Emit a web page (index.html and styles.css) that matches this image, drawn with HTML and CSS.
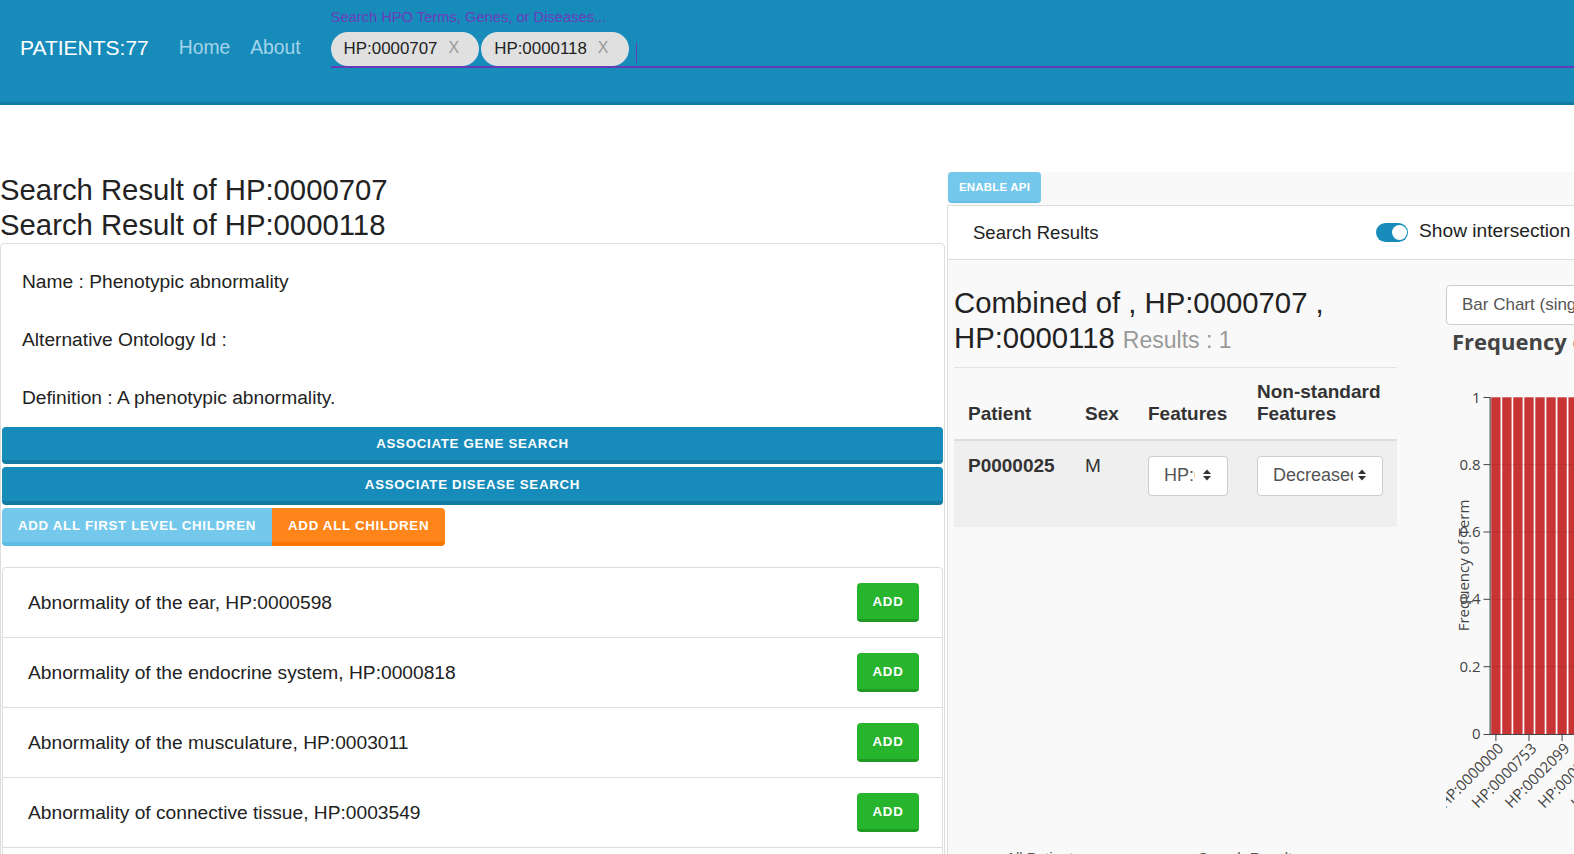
FILE: index.html
```html
<!DOCTYPE html>
<html lang="en">
<head>
<meta charset="utf-8">
<title>Patients</title>
<link rel="stylesheet" href="styles.css">
</head>
<body>
<header class="navbar">
  <div class="brand">PATIENTS:77</div>
  <nav class="nav">
    <a class="nav-link" href="#">Home</a>
    <a class="nav-link" href="#">About</a>
  </nav>
  <div class="search">
    <div class="search-label">Search HPO Terms, Genes, or Diseases...</div>
    <div class="search-field">
      <span class="chip"><span class="chip-text">HP:0000707</span><span class="chip-x">X</span></span>
      <span class="chip"><span class="chip-text">HP:0000118</span><span class="chip-x">X</span></span>
      <span class="caret-line"></span>
    </div>
  </div>
</header>

<main class="page">
  <section class="left">
    <h2 class="result-title">Search Result of HP:0000707</h2>
    <h2 class="result-title">Search Result of HP:0000118</h2>
    <div class="term-card">
      <div class="term-info">
        <p>Name : Phenotypic abnormality</p>
        <p>Alternative Ontology Id :</p>
        <p>Definition : A phenotypic abnormality.</p>
      </div>
      <button class="btn btn-block">Associate Gene Search</button>
      <button class="btn btn-block">Associate Disease Search</button>
      <div class="btn-group">
        <button class="btn btn-info">Add all first level children</button>
        <button class="btn btn-warning">Add all children</button>
      </div>
      <div class="term-list">
        <div class="term-row"><span>Abnormality of the ear, HP:0000598</span><button class="btn btn-add">Add</button></div>
        <div class="term-row"><span>Abnormality of the endocrine system, HP:0000818</span><button class="btn btn-add">Add</button></div>
        <div class="term-row"><span>Abnormality of the musculature, HP:0003011</span><button class="btn btn-add">Add</button></div>
        <div class="term-row"><span>Abnormality of connective tissue, HP:0003549</span><button class="btn btn-add">Add</button></div>
        <div class="term-row"><span>Abnormality of the eye, HP:0000478</span><button class="btn btn-add">Add</button></div>
      </div>
    </div>
  </section>

  <section class="right">
    <button class="btn-api">ENABLE API</button>
    <div class="results-card">
      <div class="results-head">
        <div class="results-title">Search Results</div>
        <div class="switch-group">
          <span class="switch"><span class="knob"></span></span>
          <span class="switch-label">Show intersection</span>
        </div>
      </div>
      <div class="results-body">
        <div class="results-main">
          <h3 class="combined">Combined of , HP:0000707 , HP:0000118 <small>Results : 1</small></h3>
          <hr class="rule">
          <table class="patients">
            <colgroup>
              <col class="c-patient"><col class="c-sex"><col class="c-feat"><col class="c-nsf">
            </colgroup>
            <thead>
              <tr><th>Patient</th><th>Sex</th><th>Features</th><th>Non-standard Features</th></tr>
            </thead>
            <tbody>
              <tr>
                <td class="pid">P0000025</td>
                <td>M</td>
                <td>
                  <div class="select sel-hp"><span class="select-text">HP:0000707</span>
                    <svg class="updown" width="10" height="14" viewBox="0 0 10 14"><path d="M1 6 L5 1.5 L9 6 Z M1 8 L5 12.5 L9 8 Z" fill="#333"/></svg>
                  </div>
                </td>
                <td>
                  <div class="select sel-dec"><span class="select-text">Decreased muscle mass</span>
                    <svg class="updown" width="10" height="14" viewBox="0 0 10 14"><path d="M1 6 L5 1.5 L9 6 Z M1 8 L5 12.5 L9 8 Z" fill="#333"/></svg>
                  </div>
                </td>
              </tr>
            </tbody>
          </table>
          <div class="sub-tabs"><span>All Patients</span><span>Search Results</span></div>
        </div>
        <div class="chart-col">
          <div class="chart-select">Bar Chart (single term)</div>
          <div class="chart-title">Frequency of Term</div>
          <svg class="chart" width="200" height="480" viewBox="0 0 200 480">
            <g stroke="#e8e8e8" stroke-width="1">
              <line x1="44" y1="310.7" x2="200" y2="310.7"/>
              <line x1="44" y1="243.3" x2="200" y2="243.3"/>
              <line x1="44" y1="176" x2="200" y2="176"/>
              <line x1="44" y1="108.6" x2="200" y2="108.6"/>
            </g>
            <g fill="#c83333">
              <rect x="45.2" y="41.3" width="9.3" height="336.7"/>
              <rect x="56.24" y="41.3" width="9.3" height="336.7"/>
              <rect x="67.28" y="41.3" width="9.3" height="336.7"/>
              <rect x="78.32" y="41.3" width="9.3" height="336.7"/>
              <rect x="89.36" y="41.3" width="9.3" height="336.7"/>
              <rect x="100.4" y="41.3" width="9.3" height="336.7"/>
              <rect x="111.44" y="41.3" width="9.3" height="336.7"/>
              <rect x="122.48" y="41.3" width="9.3" height="336.7"/>
              <rect x="133.52" y="41.3" width="9.3" height="336.7"/>
              <rect x="144.56" y="41.3" width="9.3" height="336.7"/>
              <rect x="155.6" y="41.3" width="9.3" height="336.7"/>
              <rect x="166.64" y="41.3" width="9.3" height="336.7"/>
              <rect x="177.68" y="41.3" width="9.3" height="336.7"/>
              <rect x="188.72" y="41.3" width="9.3" height="336.7"/>
            </g>
            <g stroke="rgba(0,0,0,0.07)" stroke-width="1">
              <line x1="44" y1="310.7" x2="200" y2="310.7"/>
              <line x1="44" y1="243.3" x2="200" y2="243.3"/>
              <line x1="44" y1="176" x2="200" y2="176"/>
              <line x1="44" y1="108.6" x2="200" y2="108.6"/>
            </g>
            <line x1="44.2" y1="41" x2="44.2" y2="378.5" stroke="#777" stroke-width="1.6"/>
            <line x1="37.5" y1="378.5" x2="200" y2="378.5" stroke="#444" stroke-width="1"/>
            <g stroke="#444" stroke-width="1">
              <line x1="37.5" y1="41.5" x2="44" y2="41.5"/>
              <line x1="37.5" y1="108.6" x2="44" y2="108.6"/>
              <line x1="37.5" y1="176" x2="44" y2="176"/>
              <line x1="37.5" y1="243.3" x2="44" y2="243.3"/>
              <line x1="37.5" y1="310.7" x2="44" y2="310.7"/>
              <line x1="49.9" y1="378.5" x2="49.9" y2="385"/>
              <line x1="83" y1="378.5" x2="83" y2="385"/>
              <line x1="116.1" y1="378.5" x2="116.1" y2="385"/>
              <line x1="149.2" y1="378.5" x2="149.2" y2="385"/>
              <line x1="182.3" y1="378.5" x2="182.3" y2="385"/>
            </g>
            <g class="tick" text-anchor="end">
              <text x="34.5" y="46.5">1</text>
              <text x="34.5" y="113.6">0.8</text>
              <text x="34.5" y="181">0.6</text>
              <text x="34.5" y="248.3">0.4</text>
              <text x="34.5" y="315.7">0.2</text>
              <text x="34.5" y="383">0</text>
            </g>
            <text class="tick" text-anchor="middle" transform="translate(22.5,209.5) rotate(-90)">Frequency of Term</text>
            <g class="tick" text-anchor="end">
              <text transform="translate(58.4,393.5) rotate(-45)">HP:0000000</text>
              <text transform="translate(91.5,393.5) rotate(-45)">HP:0000753</text>
              <text transform="translate(124.6,393.5) rotate(-45)">HP:0002099</text>
              <text transform="translate(157.7,393.5) rotate(-45)">HP:0002664</text>
              <text transform="translate(190.8,393.5) rotate(-45)">HP:0003011</text>
            </g>
          </svg>
        </div>
      </div>
    </div>
  </section>
</main>
</body>
</html>
```

FILE: styles.css
```css
* { box-sizing: border-box; }

html, body {
  margin: 0;
  padding: 0;
  overflow: hidden;
}

body {
  width: 1574px;
  height: 854px;
  font-family: "Liberation Sans", Arial, sans-serif;
  color: #222;
  background: #fff;
}

/* ---------- navbar ---------- */
.navbar {
  display: flex;
  align-items: flex-start;
  height: 105px;
  background: #178cbb;
  border-bottom: 3px solid #137aa3;
}

.brand {
  margin: 36px 0 0 20px;
  font-size: 21px;
  line-height: 24px;
  color: #fff;
  white-space: nowrap;
}

.nav {
  display: flex;
  gap: 20px;
  margin: 36px 0 0 30px;
}

.nav-link {
  font-size: 19.3px;
  line-height: 24px;
  color: #a3d3e8;
  text-decoration: none;
  white-space: nowrap;
}

.search {
  flex: 1;
  margin: 8px 0 0 30px;
}

.search-label {
  font-size: 14.7px;
  line-height: 18px;
  color: #6a3db9;
  white-space: nowrap;
}

.search-field {
  display: flex;
  align-items: flex-start;
  gap: 2px;
  margin-top: 6px;
  height: 36px;
  border-bottom: 2px solid #673ab7;
  background: linear-gradient(#2c3e50, #2c3e50) no-repeat 0 100% / 16px 0;
}

.chip {
  display: inline-flex;
  align-items: center;
  height: 34px;
  padding: 0 20px 0 13px;
  border-radius: 17px;
  background: #e0e0e0;
  font-size: 16.9px;
  color: #222;
  white-space: nowrap;
}

.chip-x {
  margin-left: 11px;
  margin-top: -3px;
  font-size: 16px;
  color: #999;
}

.caret-line {
  width: 1px;
  height: 20px;
  margin: 11px 0 0 5px;
  background: #673ab7;
}

/* ---------- page ---------- */
.page {
  display: flex;
  align-items: flex-start;
  padding-top: 67px;
}

.left {
  flex: 0 0 945px;
}

.result-title {
  margin: 0;
  font-size: 29.3px;
  line-height: 35px;
  font-weight: normal;
  color: #222;
  white-space: nowrap;
}

.term-card {
  margin-top: 1px;
  height: 700px;
  padding: 0 1px;
  border: 1px solid #ddd;
  border-radius: 4px;
}

.term-info {
  padding: 24px 20px 16px;
}

.term-info p {
  margin: 0 0 31px;
  font-size: 19.2px;
  line-height: 27px;
}

.term-info p:last-child {
  margin-bottom: 0;
}

.btn {
  display: flex;
  align-items: center;
  justify-content: center;
  padding: 0 16px;
  border: 0;
  border-radius: 4px;
  color: #fff;
  font-family: "Liberation Sans", Arial, sans-serif;
  font-weight: bold;
  font-size: 13.3px;
  letter-spacing: 0.7px;
  text-transform: uppercase;
  white-space: nowrap;
  cursor: pointer;
}

.btn-block {
  width: 100%;
  height: 37px;
  background: #178cbb;
  border-bottom: 4px solid #137aa2;
}

.btn-block + .btn-block {
  margin-top: 3px;
  height: 38px;
}

.btn-group {
  display: flex;
  margin-top: 3px;
}

.btn-info {
  height: 38px;
  background: #74c8eb;
  border-bottom: 4px solid #5fbde5;
  border-radius: 4px 0 0 4px;
}

.btn-warning {
  height: 38px;
  background: #ff851a;
  border-bottom: 4px solid #fa7400;
  border-radius: 0 4px 4px 0;
}

.term-list {
  margin-top: 21px;
  border: 1px solid #ddd;
  border-radius: 4px;
}

.term-row {
  display: flex;
  align-items: center;
  justify-content: space-between;
  height: 70px;
  padding: 0 23px 0 25px;
  border-bottom: 1px solid #ddd;
  font-size: 19.2px;
  color: #222;
}

.btn-add {
  width: 62px;
  height: 39px;
  padding: 0;
  background: #28b52e;
  border-bottom: 3px solid #1f9b25;
}

/* ---------- right panel ---------- */
.right {
  flex: 0 0 700px;
  margin-left: 2px;
  height: 700px;
  background: #f9f9f9;
}

.btn-api {
  display: block;
  width: 93px;
  height: 31px;
  margin-left: 1px;
  padding: 0;
  border: 0;
  border-bottom: 2px solid #63bde4;
  border-radius: 4px;
  background: #74c8eb;
  color: #fff;
  font-family: "Liberation Sans", Arial, sans-serif;
  font-weight: bold;
  font-size: 11.5px;
  letter-spacing: 0.2px;
}

.results-card {
  margin-top: 2px;
  height: 700px;
  border-top: 1px solid #ddd;
  border-left: 1px solid #ddd;
}

.results-head {
  display: flex;
  align-items: center;
  height: 54px;
  padding-left: 25px;
  background: #fff;
  border-bottom: 1px solid #ddd;
}

.results-title {
  flex: 0 0 403px;
  font-size: 18.5px;
  color: #222;
}

.switch-group {
  display: flex;
  align-items: center;
}

.switch {
  display: flex;
  justify-content: flex-end;
  align-items: center;
  width: 32px;
  height: 19px;
  padding: 0 1px;
  border-radius: 10px;
  background: #178cbb;
}

.knob {
  width: 15px;
  height: 15px;
  border-radius: 50%;
  background: #fff;
}

.switch-label {
  margin-left: 11px;
  margin-top: -3px;
  font-size: 19.2px;
  color: #222;
  white-space: nowrap;
}

.results-body {
  display: flex;
  align-items: flex-start;
  padding: 25px 0 0 6px;
}

.results-main {
  flex: 0 0 443px;
}

.combined {
  margin: 0;
  font-size: 29.3px;
  line-height: 35px;
  font-weight: normal;
  color: #222;
}

.combined small {
  font-size: 23px;
  color: #999;
}

.rule {
  margin: 9px 0 0;
  border: 0;
  border-top: 1px solid #e3e3e3;
}

.patients {
  width: 443px;
  border-collapse: collapse;
  table-layout: fixed;
}

.c-patient { width: 117px; }
.c-sex { width: 63px; }
.c-feat { width: 109px; }
.c-nsf { width: 154px; }

.patients th {
  padding: 13px 14px 14px;
  text-align: left;
  vertical-align: bottom;
  font-size: 19px;
  line-height: 22px;
  font-weight: bold;
  color: #333;
  border-bottom: 2px solid #ddd;
}

.patients td {
  padding: 14px 0 31px 14px;
  vertical-align: top;
  font-size: 19px;
  line-height: 22px;
  color: #333;
  background: #efefef;
}

.patients td.pid {
  font-weight: bold;
}

.select {
  display: flex;
  align-items: center;
  justify-content: space-between;
  height: 40px;
  margin-top: 1px;
  padding: 0 15px 2px 15px;
  background: #fff;
  border: 1px solid #ccc;
  border-radius: 4px;
  font-size: 18px;
  color: #555;
}

.select-text {
  overflow: hidden;
  white-space: nowrap;
}

.sel-hp { width: 80px; }
.sel-hp .select-text { width: 31px; }
.sel-dec { width: 126px; }
.sel-dec .select-text { width: 80px; }

.updown {
  flex: none;
  display: block;
}

.sub-tabs {
  display: flex;
  margin-top: 322px;
  padding-left: 52px;
  font-size: 15px;
  line-height: 18px;
  color: #555;
}

.sub-tabs span + span {
  margin-left: 117px;
}

.chart-col {
  flex: 0 0 200px;
  margin-left: 49px;
}

.chart-select {
  display: flex;
  align-items: center;
  width: 200px;
  height: 40px;
  padding-left: 15px;
  background: #fff;
  border: 1px solid #ccc;
  border-radius: 4px;
  font-size: 17px;
  color: #555;
  white-space: nowrap;
  overflow: hidden;
}

.chart-title {
  margin: 1px 0 0 6px;
  font-family: "Open Sans", "Noto Sans", sans-serif;
  font-weight: bold;
  font-size: 22px;
  line-height: 30px;
  color: #444;
  white-space: nowrap;
}

.chart {
  display: block;
}

.tick {
  font-family: "Open Sans", "Noto Sans", sans-serif;
  font-size: 15px;
  fill: #444;
}
```
